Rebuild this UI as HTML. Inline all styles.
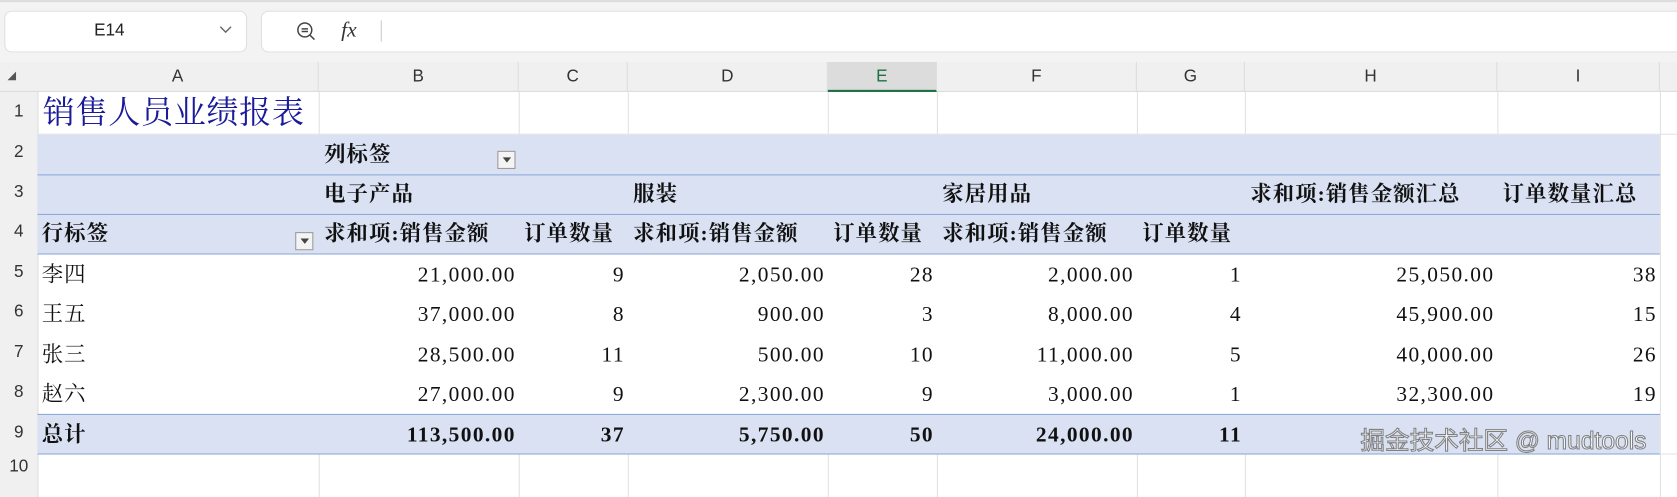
<!DOCTYPE html><html><head><meta charset="utf-8"><style>
body{margin:0;width:1677px;height:465px;overflow:hidden;background:#fff;position:relative;font-family:"Liberation Serif","Noto Serif CJK SC",serif;}
#w{position:absolute;left:0;top:0;width:1568px;height:435px;transform:scale(1.06952);transform-origin:0 0;}
.a{position:absolute}
.t{position:absolute;font-size:20px;line-height:22px;color:#111;white-space:nowrap;letter-spacing:1px}
.n{letter-spacing:1.3px;margin-right:-1.3px}
.r{text-align:right}
.b{font-weight:bold}
.hd{position:absolute;top:58px;height:28px;line-height:28px;text-align:center;font-family:"Liberation Sans",sans-serif;font-size:16px;color:#333;border-right:1px solid #ddd;box-sizing:border-box}
.rn{position:absolute;left:0;width:35px;text-align:center;font-family:"Liberation Sans",sans-serif;font-size:16px;color:#333}
.vl{position:absolute;width:1px;background:#e2e2e2}
.hl{position:absolute;height:1px;left:35px}
</style></head><body><div id="w">
<div class="a" style="left:0;top:0;width:1568px;height:58px;background:#f3f3f3"></div>
<div class="a" style="left:0;top:0;width:1568px;height:2px;background:#ddd"></div>
<div class="a" style="left:4px;top:10px;width:225px;height:37px;background:#fff;border-radius:7px;border:1px solid #e0e0e0"></div>
<div class="a" style="left:88px;top:20px;font:16px 'Liberation Sans',sans-serif;color:#222">E14</div>
<svg class="a" style="left:205px;top:24px" width="12" height="8"><path d="M1 1 L6 6 L11 1" fill="none" stroke="#666" stroke-width="1.3"/></svg>
<div class="a" style="left:244px;top:10px;width:1340px;height:37px;background:#fff;border-radius:7px;border:1px solid #e0e0e0"></div>
<svg class="a" style="left:276px;top:19px" width="20" height="20"><circle cx="9" cy="9" r="6.5" fill="none" stroke="#444" stroke-width="1.4"/><path d="M6 8h6M6 10.5h6M14 14l4 4" stroke="#444" stroke-width="1.4"/></svg>
<div class="a" style="left:319px;top:17px;font:italic 20px 'Liberation Serif',serif;color:#333">fx</div>
<div class="a" style="left:356px;top:19px;width:1px;height:20px;background:#ccc"></div>
<div class="a" style="left:0;top:58px;width:1568px;height:28px;background:#f0f0f0;border-bottom:1px solid #ddd;box-sizing:border-box"></div>
<svg class="a" style="left:6px;top:66px" width="10" height="10"><path d="M9 1 L9 9 L1 9Z" fill="#555"/></svg>
<div class="hd" style="left:35px;width:263px">A</div>
<div class="hd" style="left:298px;width:187px">B</div>
<div class="hd" style="left:485px;width:102px">C</div>
<div class="hd" style="left:587px;width:187px">D</div>
<div class="hd" style="left:774px;width:102px;background:#dcdcdc;color:#1e7145;border-bottom:2px solid #1e7145">E</div>
<div class="hd" style="left:876px;width:187px">F</div>
<div class="hd" style="left:1063px;width:101px">G</div>
<div class="hd" style="left:1164px;width:236px">H</div>
<div class="hd" style="left:1400px;width:152px">I</div>
<div class="a" style="left:0;top:86px;width:35px;height:379px;background:#f0f0f0;border-right:1px solid #ddd"></div>
<div class="rn" style="top:96px">1</div><div class="rn" style="top:134px">2</div><div class="rn" style="top:171px">3</div><div class="rn" style="top:208px">4</div><div class="rn" style="top:246px">5</div><div class="rn" style="top:283px">6</div><div class="rn" style="top:321px">7</div><div class="rn" style="top:358px">8</div><div class="rn" style="top:396px">9</div><div class="rn" style="top:428px">10</div>
<div class="vl" style="left:298px;top:86px;height:40px"></div><div class="vl" style="left:485px;top:86px;height:40px"></div><div class="vl" style="left:587px;top:86px;height:40px"></div><div class="vl" style="left:774px;top:86px;height:40px"></div><div class="vl" style="left:876px;top:86px;height:40px"></div><div class="vl" style="left:1063px;top:86px;height:40px"></div><div class="vl" style="left:1164px;top:86px;height:40px"></div><div class="vl" style="left:1400px;top:86px;height:40px"></div><div class="vl" style="left:1552px;top:86px;height:379px"></div>
<div class="vl" style="left:298px;top:424px;height:41px"></div><div class="vl" style="left:485px;top:424px;height:41px"></div><div class="vl" style="left:587px;top:424px;height:41px"></div><div class="vl" style="left:774px;top:424px;height:41px"></div><div class="vl" style="left:876px;top:424px;height:41px"></div><div class="vl" style="left:1063px;top:424px;height:41px"></div><div class="vl" style="left:1164px;top:424px;height:41px"></div><div class="vl" style="left:1400px;top:424px;height:41px"></div>
<div class="hl" style="top:125px;width:1533px;background:#e2e2e2"></div>
<div class="hl" style="top:424px;width:1533px;background:#e2e2e2"></div>
<div class="a" style="left:35px;top:126px;width:1517px;height:111px;background:#d9e1f2"></div>
<div class="a" style="left:35px;top:387px;width:1517px;height:37px;background:#d9e1f2"></div>
<div class="hl" style="top:163px;width:1517px;background:#8ea9db"></div>
<div class="hl" style="top:200px;width:1517px;background:#8ea9db"></div>
<div class="hl" style="top:237px;width:1517px;background:#8ea9db"></div>
<div class="hl" style="top:387px;width:1517px;background:#8ea9db"></div>
<div class="hl" style="top:424px;width:1517px;background:#8ea9db"></div>
<div class="a" style="left:40px;top:87px;font-size:30px;line-height:38px;letter-spacing:0.6px;color:#1a1a9a;font-family:'Liberation Serif','Noto Serif CJK SC',serif">销售人员业绩报表</div>
<div class="t b" style="left:303px;top:134px">列标签</div>
<div class="a" style="left:465px;top:141px;width:17px;height:17px;background:#f4f4f4;border:1px solid #999;box-sizing:border-box"></div><svg class="a" style="left:469px;top:147px" width="10" height="6"><path d="M1 0h8L5 5z" fill="#444"/></svg>
<div class="a" style="left:276px;top:217px;width:17px;height:17px;background:#f4f4f4;border:1px solid #999;box-sizing:border-box"></div><svg class="a" style="left:280px;top:223px" width="10" height="6"><path d="M1 0h8L5 5z" fill="#444"/></svg>
<div class="t b" style="left:303px;top:171px">电子产品</div>
<div class="t b" style="left:592px;top:171px">服装</div>
<div class="t b" style="left:881px;top:171px">家居用品</div>
<div class="t b" style="left:1169px;top:171px">求和项:销售金额汇总</div>
<div class="t b" style="left:1405px;top:171px">订单数量汇总</div>
<div class="t b" style="left:39px;top:208px">行标签</div>
<div class="t b" style="left:303px;top:208px">求和项:销售金额</div>
<div class="t b" style="left:490px;top:208px">订单数量</div>
<div class="t b" style="left:592px;top:208px">求和项:销售金额</div>
<div class="t b" style="left:779px;top:208px">订单数量</div>
<div class="t b" style="left:881px;top:208px">求和项:销售金额</div>
<div class="t b" style="left:1068px;top:208px">订单数量</div>
<div class="t" style="left:39px;top:246px">李四</div><div class="t" style="left:39px;top:283px">王五</div><div class="t" style="left:39px;top:321px">张三</div><div class="t" style="left:39px;top:358px">赵六</div><div class="t b" style="left:39px;top:396px">总计</div>
<div class="t n r" style="right:1087px;top:246px">21,000.00</div><div class="t n r" style="right:985px;top:246px">9</div><div class="t n r" style="right:798px;top:246px">2,050.00</div><div class="t n r" style="right:696px;top:246px">28</div><div class="t n r" style="right:509px;top:246px">2,000.00</div><div class="t n r" style="right:408px;top:246px">1</div><div class="t n r" style="right:172px;top:246px">25,050.00</div><div class="t n r" style="right:20px;top:246px">38</div>
<div class="t n r" style="right:1087px;top:283px">37,000.00</div><div class="t n r" style="right:985px;top:283px">8</div><div class="t n r" style="right:798px;top:283px">900.00</div><div class="t n r" style="right:696px;top:283px">3</div><div class="t n r" style="right:509px;top:283px">8,000.00</div><div class="t n r" style="right:408px;top:283px">4</div><div class="t n r" style="right:172px;top:283px">45,900.00</div><div class="t n r" style="right:20px;top:283px">15</div>
<div class="t n r" style="right:1087px;top:321px">28,500.00</div><div class="t n r" style="right:985px;top:321px">11</div><div class="t n r" style="right:798px;top:321px">500.00</div><div class="t n r" style="right:696px;top:321px">10</div><div class="t n r" style="right:509px;top:321px">11,000.00</div><div class="t n r" style="right:408px;top:321px">5</div><div class="t n r" style="right:172px;top:321px">40,000.00</div><div class="t n r" style="right:20px;top:321px">26</div>
<div class="t n r" style="right:1087px;top:358px">27,000.00</div><div class="t n r" style="right:985px;top:358px">9</div><div class="t n r" style="right:798px;top:358px">2,300.00</div><div class="t n r" style="right:696px;top:358px">9</div><div class="t n r" style="right:509px;top:358px">3,000.00</div><div class="t n r" style="right:408px;top:358px">1</div><div class="t n r" style="right:172px;top:358px">32,300.00</div><div class="t n r" style="right:20px;top:358px">19</div>
<div class="t n r b" style="right:1087px;top:396px">113,500.00</div><div class="t n r b" style="right:985px;top:396px">37</div><div class="t n r b" style="right:798px;top:396px">5,750.00</div><div class="t n r b" style="right:696px;top:396px">50</div><div class="t n r b" style="right:509px;top:396px">24,000.00</div><div class="t n r b" style="right:408px;top:396px">11</div>
<div class="a" style="left:1272px;top:393px;font:23px 'Liberation Sans','Noto Sans CJK SC',sans-serif;color:#fff;-webkit-text-stroke:1px #777;opacity:.9">掘金技术社区 @ mudtools</div>
</div></body></html>
